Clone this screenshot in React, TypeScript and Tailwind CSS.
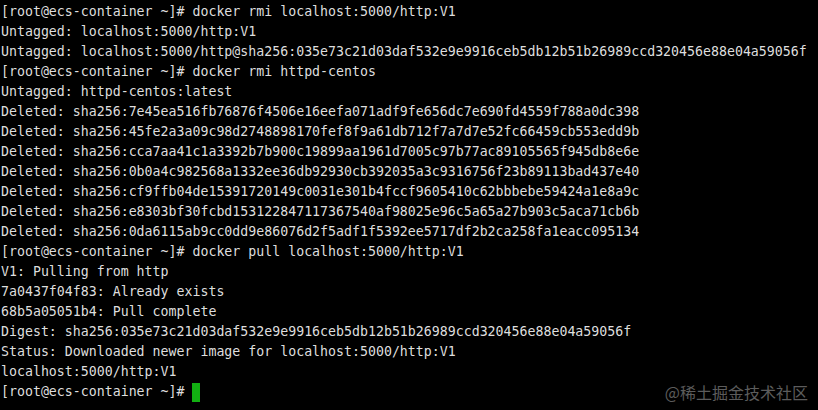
const lines = [
  '[root@ecs-container ~]# docker rmi localhost:5000/http:V1',
  'Untagged: localhost:5000/http:V1',
  'Untagged: localhost:5000/http@sha256:035e73c21d03daf532e9e9916ceb5db12b51b26989ccd320456e88e04a59056f',
  '[root@ecs-container ~]# docker rmi httpd-centos',
  'Untagged: httpd-centos:latest',
  'Deleted: sha256:7e45ea516fb76876f4506e16eefa071adf9fe656dc7e690fd4559f788a0dc398',
  'Deleted: sha256:45fe2a3a09c98d2748898170fef8f9a61db712f7a7d7e52fc66459cb553edd9b',
  'Deleted: sha256:cca7aa41c1a3392b7b900c19899aa1961d7005c97b77ac89105565f945db8e6e',
  'Deleted: sha256:0b0a4c982568a1332ee36db92930cb392035a3c9316756f23b89113bad437e40',
  'Deleted: sha256:cf9ffb04de15391720149c0031e301b4fccf9605410c62bbbebe59424a1e8a9c',
  'Deleted: sha256:e8303bf30fcbd153122847117367540af98025e96c5a65a27b903c5aca71cb6b',
  'Deleted: sha256:0da6115ab9cc0dd9e86076d2f5adf1f5392ee5717df2b2ca258fa1eacc095134',
  '[root@ecs-container ~]# docker pull localhost:5000/http:V1',
  'V1: Pulling from http',
  '7a0437f04f83: Already exists',
  '68b5a05051b4: Pull complete',
  'Digest: sha256:035e73c21d03daf532e9e9916ceb5db12b51b26989ccd320456e88e04a59056f',
  'Status: Downloaded newer image for localhost:5000/http:V1',
  'localhost:5000/http:V1',
];

export default function App() {
  return (
    <div className="relative w-[818px] h-[410px] overflow-hidden bg-black pl-[1px] pt-[2px] text-[#dedede] text-[13.25px] leading-[20px] font-['DejaVu_Sans_Mono',monospace] whitespace-pre">
      {lines.map((l, i) => (
        <div key={i}>{l}</div>
      ))}
      {/* prompt with cursor */}
      <div className="flex items-center">
        <span>[root@ecs-container ~]# </span>
        <span className="inline-block w-[8px] h-[19px] bg-[#12b012]" />
      </div>

      {/* watermark */}
      <div className="absolute right-[10px] bottom-[8px] text-[16px] leading-[20px] text-[#5c5c5c] font-['Noto_Sans_CJK_SC',sans-serif]">
        @稀土掘金技术社区
      </div>
    </div>
  );
}
